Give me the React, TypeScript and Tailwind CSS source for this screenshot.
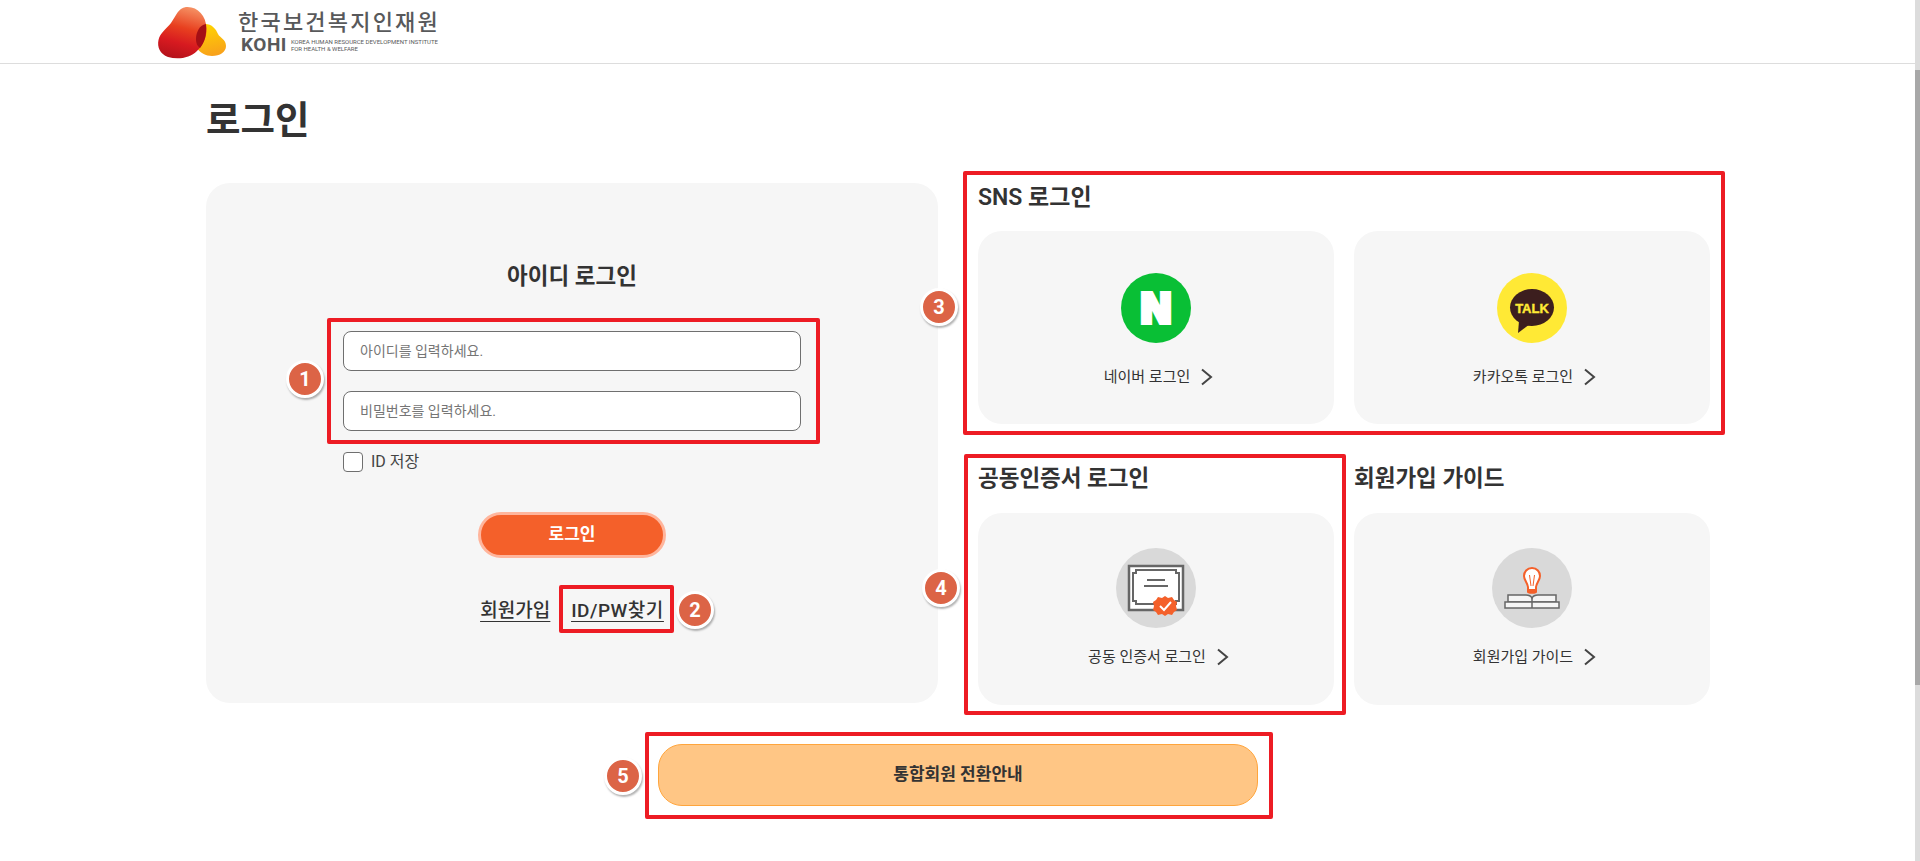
const font = '[font-family:Roboto,"Noto_Sans_CJK_KR",sans-serif]';

function Chevron() {
  return (
    <svg width="14" height="18" viewBox="0 0 14 18" fill="none" className="shrink-0">
      <path d="M2 1.5 L11 9 L2 16.5" stroke="#444" strokeWidth="2" />
    </svg>
  );
}

function Logo() {
  return (
    <svg width="76" height="62" viewBox="0 0 76 62">
      <defs>
        <linearGradient id="red" x1="0.6" y1="0" x2="0.35" y2="1">
          <stop offset="0" stopColor="#f58f62" />
          <stop offset="0.4" stopColor="#e8401f" />
          <stop offset="0.7" stopColor="#d71a20" />
          <stop offset="1" stopColor="#b5121b" />
        </linearGradient>
        <linearGradient id="yellow" x1="0.4" y1="0" x2="0.6" y2="1">
          <stop offset="0" stopColor="#ffd400" />
          <stop offset="1" stopColor="#f8a01c" />
        </linearGradient>
      </defs>
      <path
        d="M55 23 C62 23 66 28 68 33 C70 37 76 38 76 45 C76 51 70 55 62 55 C56 55 50 52 46 46 Z"
        fill="url(#yellow)"
      />
      <path
        d="M36 6 C47 5 56 14 56.5 27 C57 36 53 44 47 50 C40 57 28 59 18 56 C10 53 7 46 8.5 39 C10 32 16 28 21 22 C26 15 28 7 36 6 Z"
        fill="url(#red)"
      />
      <path d="M56 23 C49 24 46 32 46 38 C46 42 47 45 50 47 C54 42 57 35 56 23 Z" fill="#a50f15" />
    </svg>
  );
}

function NaverIcon() {
  return (
    <svg width="70" height="70" viewBox="0 0 70 70">
      <circle cx="35" cy="35" r="35" fill="#09bf35" />
      <text
        x="35"
        y="49.5"
        textAnchor="middle"
        fontFamily="DejaVu Sans"
        fontWeight="700"
        fontSize="40"
        fill="#fff"
        stroke="#fff"
        strokeWidth="4"
        strokeLinejoin="miter"
      >
        N
      </text>
    </svg>
  );
}

function KakaoIcon() {
  return (
    <svg width="70" height="70" viewBox="0 0 70 70">
      <circle cx="35" cy="35" r="35" fill="#ffe935" />
      <ellipse cx="35" cy="34.5" rx="22" ry="18.5" fill="#3c1e1e" />
      <path d="M22 48 L21 60 L33 51 Z" fill="#3c1e1e" />
      <text
        x="35"
        y="39.5"
        textAnchor="middle"
        fontFamily="Liberation Sans"
        fontWeight="700"
        fontSize="13"
        fill="#ffe935"
        stroke="#ffe935"
        strokeWidth="0.4"
      >
        TALK
      </text>
    </svg>
  );
}

function CertIcon() {
  return (
    <svg width="80" height="80" viewBox="0 0 80 80">
      <circle cx="40" cy="40" r="40" fill="#d9d9d9" />
      <rect x="13" y="18" width="54" height="44" fill="#fff" stroke="#666" strokeWidth="2.5" />
      <path
        d="M20 22 H60 V25 H63 V53 H60 V56 H20 V53 H17 V25 H20 Z"
        fill="none"
        stroke="#666"
        strokeWidth="2"
      />
      <path d="M31 32 H49 M28 38 H52" stroke="#666" strokeWidth="2" />
      <path
        d="M49 48 L52 50 L56 49 L58 52 L61 54 L60 58 L61 62 L58 64 L56 67 L52 66 L49 68 L46 66 L42 67 L40 64 L37 62 L38 58 L37 54 L40 52 L42 49 L46 50 Z"
        fill="#f4602a"
      />
      <path d="M44 58 L48 62 L55 54" fill="none" stroke="#fff" strokeWidth="2" />
    </svg>
  );
}

function GuideIcon() {
  return (
    <svg width="80" height="80" viewBox="0 0 80 80">
      <circle cx="40" cy="40" r="40" fill="#d9d9d9" />
      <path
        d="M40 20 C45 20 48 24 48 28 C48 32 44.5 35 44 39 V44 C44 45 36 45 36 44 V39 C35.5 35 32 32 32 28 C32 24 35 20 40 20 Z"
        fill="#fff"
        stroke="#f4602a"
        strokeWidth="2"
      />
      <path d="M37.5 27 L39 38 M42.5 27 L41 38" stroke="#f4602a" strokeWidth="1" fill="none" />
      <path d="M36 41 H44 V44 C44 45 36 45 36 44 Z" fill="#f4602a" />
      <path d="M16 47 H34 C37 47 39 48 40 50 C41 48 43 47 46 47 H64 V54 H16 Z" fill="#f5f5f5" stroke="#666" strokeWidth="1.5" />
      <path d="M13 54 H67 V60 H13 Z" fill="#f5f5f5" stroke="#666" strokeWidth="1.5" />
      <path d="M40 50 V60" stroke="#666" strokeWidth="1.5" />
    </svg>
  );
}

function LoginCard({ label, icon, pad, gap }: { label: string; icon: React.ReactNode; pad: string; gap: string }) {
  return (
    <div className={`flex flex-col items-center rounded-3xl bg-[#f6f6f6] ${pad}`}>
      {icon}
      <div className={`ml-[6px] flex h-6 items-center gap-2.5 text-[15px] text-[#333] ${gap}`}>
        <span>{label}</span>
        <Chevron />
      </div>
    </div>
  );
}

function Badge({ n, className }: { n: number; className: string }) {
  return (
    <div
      className={`absolute flex h-[38px] w-[38px] items-center justify-center rounded-full border-[3px] border-white bg-[#dc6446] text-xl font-bold text-white shadow-[1px_2px_2px_rgba(0,0,0,0.3)] ${className}`}
    >
      {n}
    </div>
  );
}

function Mark({ className }: { className: string }) {
  return <div className={`absolute rounded-[2px] border-4 border-[#ed1c24] ${className}`} />;
}

export default function App() {
  return (
    <div className={`relative h-[861px] overflow-hidden bg-white text-[#333] ${font}`}>
      <header className="flex h-16 items-center border-b border-[#ddd] pl-[150px]">
        <Logo />
        <div className="ml-3 flex flex-col text-[#58595b]">
          <div className="text-[22px] leading-[26px] font-medium tracking-[2.2px]">한국보건복지인재원</div>
          <div className="ml-[3px] flex items-center gap-1">
            <span className="text-[19px] leading-[18px] font-bold tracking-[0.5px]">KOHI</span>
            <div className="flex flex-col text-[6px] leading-[7px] whitespace-nowrap">
              <span>KOREA HUMAN RESOURCE DEVELOPMENT INSTITUTE</span>
              <span>FOR HEALTH &amp; WELFARE</span>
            </div>
          </div>
        </div>
      </header>

      <main className="mx-auto w-[1504px] -translate-x-[2px]">
        <h1 className="mt-7 h-14 text-[37.5px] leading-[56px] font-bold">로그인</h1>

        <div className="mt-[35px] grid grid-cols-[732px_732px] items-start gap-x-10">
          <section className="flex h-[520px] flex-col rounded-3xl bg-[#f6f6f6] px-[137px] pt-[78px]">
            <h2 className="h-[30px] text-center text-[22.5px] leading-[30px] font-semibold">아이디 로그인</h2>
            <div className="mt-10 flex h-10 items-center rounded-lg border border-[#6f6f6f] bg-white px-4 text-sm text-[#757575]">
              아이디를 입력하세요.
            </div>
            <div className="mt-5 flex h-10 items-center rounded-lg border border-[#6f6f6f] bg-white px-4 text-sm text-[#757575]">
              비밀번호를 입력하세요.
            </div>
            <label className="mt-[21px] flex h-5 items-center gap-2 text-base text-[#444]">
              <span className="h-5 w-5 rounded-[4px] border border-[#6f6f6f] bg-white" />
              ID 저장
            </label>
            <button className="mx-auto mt-10 h-[46px] w-[188px] rounded-full border-[3px] border-[#ffb59c] bg-[#f4602a] text-[17px] font-bold text-white">
              로그인
            </button>
            <div className="mt-[39px] flex h-7 items-center justify-center gap-[21px] text-[19px] font-medium underline underline-offset-4">
              <a>회원가입</a>
              <a className="tracking-[0.5px]">ID/PW찾기</a>
            </div>
          </section>

          <div className="grid grid-cols-[356px_356px] gap-x-5">
            <section className="col-span-2">
              <h2 className="mb-5 h-7 text-[23px] leading-[30px] font-semibold">SNS 로그인</h2>
              <div className="grid grid-cols-2 gap-x-5">
                <LoginCard label="네이버 로그인" icon={<NaverIcon />} pad="h-[193px] pt-[42px]" gap="mt-[22px]" />
                <LoginCard label="카카오톡 로그인" icon={<KakaoIcon />} pad="h-[193px] pt-[42px]" gap="mt-[22px]" />
              </div>
            </section>
            <section className="mt-[41px]">
              <h2 className="mb-5 h-7 text-[22.5px] leading-[26px] font-semibold">공동인증서 로그인</h2>
              <LoginCard label="공동 인증서 로그인" icon={<CertIcon />} pad="h-[192px] pt-[35px]" gap="mt-[17px]" />
            </section>
            <section className="mt-[41px]">
              <h2 className="mb-5 h-7 text-[22.5px] leading-[26px] font-semibold">회원가입 가이드</h2>
              <LoginCard label="회원가입 가이드" icon={<GuideIcon />} pad="h-[192px] pt-[35px]" gap="mt-[17px]" />
            </section>
          </div>
        </div>

        <button className="mx-auto mt-[39px] block h-[62px] w-[600px] rounded-3xl border border-[#ffa53c] bg-[#ffc685] text-[17px] font-semibold">
          통합회원 전환안내
        </button>
      </main>

      <Mark className="top-[318px] left-[327px] h-[126px] w-[493px]" />
      <Mark className="top-[585px] left-[559px] h-[48px] w-[115px]" />
      <Mark className="top-[171px] left-[963px] h-[264px] w-[762px]" />
      <Mark className="top-[454px] left-[964px] h-[261px] w-[382px]" />
      <Mark className="top-[732px] left-[645px] h-[87px] w-[628px]" />

      <Badge n={1} className="top-[360px] left-[286px]" />
      <Badge n={2} className="top-[591px] left-[676px]" />
      <Badge n={3} className="top-[288px] left-[920px]" />
      <Badge n={4} className="top-[569px] left-[922px]" />
      <Badge n={5} className="top-[757px] left-[604px]" />

      <div className="absolute top-0 right-0 h-full w-[5px] bg-[#dcdcdc]">
        <div className="mt-[70px] h-[615px] bg-[#a8a8a8]" />
      </div>
    </div>
  );
}
